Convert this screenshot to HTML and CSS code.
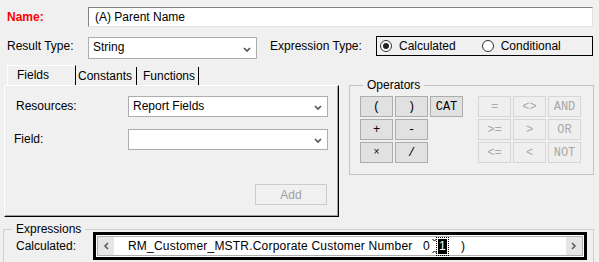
FILE: index.html
```html
<!DOCTYPE html>
<html lang="en">
  <head>
    <meta charset="UTF-8" />
    <meta name="viewport" content="width=device-width, initial-scale=1.0" />
    <title>Calculated Field</title>
    <link rel="stylesheet" href="styles.css">
  </head>
  <body>
    <div class="name-row">
      <label class="name-label">Name:</label>
      <div class="textbox">(A) Parent Name</div>
    </div>

    <div class="type-row">
      <label class="row-label">Result Type:</label>
      <div class="combo combo-type">
        <span>String</span>
        <svg class="chevron" width="8" height="5" viewBox="0 0 8 5"><path d="M1 1 L4 4 L7 1" /></svg>
      </div>
      <label class="expr-type-label">Expression Type:</label>
      <div class="radio-box">
        <span class="radio on"></span><span class="radio-text">Calculated</span>
        <span class="radio radio-second"></span><span class="radio-text">Conditional</span>
      </div>
    </div>

    <div class="middle">
      <div class="tabs">
        <div class="tab-strip">
          <div class="tab active">Fields</div>
          <div class="tab tab-constants">Constants</div>
          <div class="tab tab-functions">Functions</div>
        </div>
        <div class="tab-panel">
          <div class="field-row">
            <label class="field-label resources-label">Resources:</label>
            <div class="combo combo-field">
              <span>Report Fields</span>
              <svg class="chevron" width="8" height="5" viewBox="0 0 8 5"><path d="M1 1 L4 4 L7 1" /></svg>
            </div>
          </div>
          <div class="field-row">
            <label class="field-label">Field:</label>
            <div class="combo combo-field">
              <span></span>
              <svg class="chevron" width="8" height="5" viewBox="0 0 8 5"><path d="M1 1 L4 4 L7 1" /></svg>
            </div>
          </div>
          <button class="add-btn" disabled>Add</button>
        </div>
      </div>

      <fieldset class="group operators">
        <legend>Operators</legend>
        <div class="op-grids">
          <div class="op-grid">
            <button class="op">(</button>
            <button class="op">)</button>
            <button class="op">CAT</button>
            <button class="op">+</button>
            <button class="op">-</button>
            <span></span>
            <button class="op op-times">×</button>
            <button class="op">/</button>
            <span></span>
          </div>
          <div class="op-grid">
            <button class="op" disabled>=</button>
            <button class="op" disabled>&lt;&gt;</button>
            <button class="op" disabled>AND</button>
            <button class="op" disabled>&gt;=</button>
            <button class="op" disabled>&gt;</button>
            <button class="op" disabled>OR</button>
            <button class="op" disabled>&lt;=</button>
            <button class="op" disabled>&lt;</button>
            <button class="op" disabled>NOT</button>
          </div>
        </div>
      </fieldset>
    </div>

    <fieldset class="group expressions">
      <legend>Expressions</legend>
      <div class="expr-row">
        <label class="expr-label">Calculated:</label>
        <div class="expr-box">
          <div class="expr-inner">
            <div class="scroll-btn">
              <svg width="6" height="8" viewBox="0 0 6 8"><path d="M5 1 L2 4 L5 7" /></svg>
            </div>
            <div class="expr-text">
              <span class="expr-chunk">RM_Customer_MSTR.Corporate Customer Number   0</span><svg class="caret" width="5" height="18" viewBox="0 0 5 18"><path d="M0.5 2 L2.5 4 L4.5 2 M0.5 16 L2.5 14 L4.5 16" /></svg><span class="sel">1</span><span class="expr-chunk">    )</span>
            </div>
            <div class="scroll-btn">
              <svg width="6" height="8" viewBox="0 0 6 8"><path d="M1 1 L4 4 L1 7" /></svg>
            </div>
          </div>
        </div>
      </div>
    </fieldset>
  </body>
</html>
```

FILE: styles.css
```css
body {
  margin: 0;
  width: 599px;
  height: 262px;
  overflow: hidden;
  background-color: #f0f0f0;
  font-family: "Liberation Sans", Arial, sans-serif;
  font-size: 12px;
  color: #000;
}

/* top rows */
.name-row {
  display: flex;
  align-items: center;
  padding: 7px 0 0 7px;
}
.name-label {
  width: 81px;
  color: #f00;
  font-weight: bold;
}
.textbox {
  width: 505px;
  height: 20px;
  box-sizing: border-box;
  background: #fff;
  border: 1px solid;
  border-color: #838383 #e3e3e3 #e3e3e3 #838383;
  padding-left: 6px;
  line-height: 18px;
}
.type-row {
  display: flex;
  align-items: flex-start;
  padding: 9px 0 0 7px;
}
.row-label {
  width: 81px;
  line-height: 20px;
}
.combo {
  display: flex;
  justify-content: space-between;
  height: 22px;
  margin-top: 1px;
  box-sizing: border-box;
  border: 1px solid #adadad;
  background: #fff;
  padding: 2px 5px 0 4px;
  line-height: 14px;
}
.combo-type {
  width: 169px;
}
.chevron {
  align-self: center;
}
.chevron path {
  fill: none;
  stroke: #555;
  stroke-width: 1.7;
}
.expr-type-label {
  width: 106px;
  margin-left: 13px;
  line-height: 20px;
}
.radio-box {
  display: flex;
  align-items: center;
  width: 217px;
  height: 20px;
  box-sizing: border-box;
  border: 1px solid #000;
  padding-left: 3px;
}
.radio {
  display: flex;
  align-items: center;
  justify-content: center;
  width: 12px;
  height: 12px;
  box-sizing: border-box;
  border: 1px solid #333;
  border-radius: 50%;
  background: #fff;
}
.radio.on::after {
  content: "";
  width: 6px;
  height: 6px;
  border-radius: 50%;
  background: #222;
}
.radio-text {
  margin-left: 7px;
}
.radio-second {
  margin-left: 26px;
}

/* tabs + operators */
.middle {
  display: flex;
  align-items: flex-start;
  margin-top: 6px;
}
.tabs {
  width: 335px;
  margin-left: 4px;
}
.tab-strip {
  display: flex;
  align-items: flex-end;
  height: 20px;
  padding-left: 3px;
}
.tab {
  height: 18px;
  line-height: 18px;
  border-right: 1px solid #000;
}
.tab.active {
  width: 58px;
  height: 19px;
  line-height: 19px;
  padding-left: 9px;
  border-top: 1px solid #fff;
  border-left: 1px solid #fff;
}
.tab-constants {
  width: 58px;
  padding-left: 2px;
}
.tab-functions {
  width: 55px;
  padding-left: 6px;
}
.tab-panel {
  height: 132px;
  box-sizing: border-box;
  border: 1px solid;
  border-color: #fff #000 #000 #fff;
  box-shadow: inset -1px -1px 0 #a0a0a0;
  padding: 10px 0 0 9px;
}
.field-row {
  display: flex;
  align-items: flex-start;
  height: 21px;
}
.field-row + .field-row {
  margin-top: 12px;
}
.field-label {
  width: 114px;
  line-height: 21px;
}
.resources-label {
  width: 112px;
  padding-left: 2px;
}
.combo-field {
  width: 200px;
  height: 21px;
  margin-top: 0;
}
.add-btn {
  display: block;
  width: 72px;
  height: 21px;
  margin: 34px 0 0 241px;
  padding: 0;
  border: 1px solid #cccccc;
  background: #f0f0f0;
  color: #a0a0a0;
  font-family: inherit;
  font-size: 12px;
}

.group {
  margin: 0;
  min-width: 0;
  box-sizing: border-box;
  border: 1px solid #c4c4c4;
}
.group legend {
  padding: 0 4px;
  line-height: 14px;
}
.operators {
  width: 245px;
  margin: 13px 0 0 10px;
  padding: 4px 12px 11px 10px;
}
.operators legend {
  margin-left: 3px;
}
.op-grids {
  display: flex;
  gap: 15px;
}
.op-grid {
  display: grid;
  grid-template-columns: repeat(3, 33px);
  grid-auto-rows: 21px;
  gap: 2px;
}
.op {
  padding: 0;
  box-sizing: border-box;
  border: 1px solid #adadad;
  background: #e1e1e1;
  color: #000;
  font-family: "Liberation Mono", monospace;
  font-size: 12px;
}
.op:disabled {
  border-color: #d6d6d6;
  background: #efefef;
  color: #a8a8a8;
}
.op-times {
  font-size: 10px;
}

/* expressions */
.expressions {
  width: 591px;
  margin: 5px 0 0 3px;
  padding: 0 0 40px 12px;
  border-color: #d0d0d0;
}
.expressions legend {
  margin-left: -4px;
}
.expr-row {
  display: flex;
  align-items: center;
  margin-top: -4px;
}
.expr-label {
  width: 77px;
}
.expr-box {
  width: 494px;
  height: 28px;
  box-sizing: border-box;
  border: 3px solid #000;
  padding: 1px;
  background: #fff;
}
.expr-inner {
  display: flex;
  height: 100%;
  box-sizing: border-box;
  border: 1px solid #b0b0b0;
}
.scroll-btn {
  display: flex;
  align-items: center;
  justify-content: center;
  width: 16px;
  background: #e6e6e6;
}
.scroll-btn path,
.caret path {
  fill: none;
  stroke: #606060;
  stroke-width: 1.7;
}
.caret path {
  stroke: #000;
  stroke-width: 1;
}
.expr-text {
  flex: 1;
  display: flex;
  align-items: center;
  padding-left: 14px;
  white-space: pre;
  letter-spacing: 0.2px;
}
.caret {
  margin-left: 2px;
}
.sel {
  display: inline-block;
  width: 9px;
  height: 15px;
  line-height: 15px;
  margin-left: 1px;
  text-align: center;
  background: #000;
  color: #fff;
  outline: 1px dotted #000;
  outline-offset: 1px;
}
```
